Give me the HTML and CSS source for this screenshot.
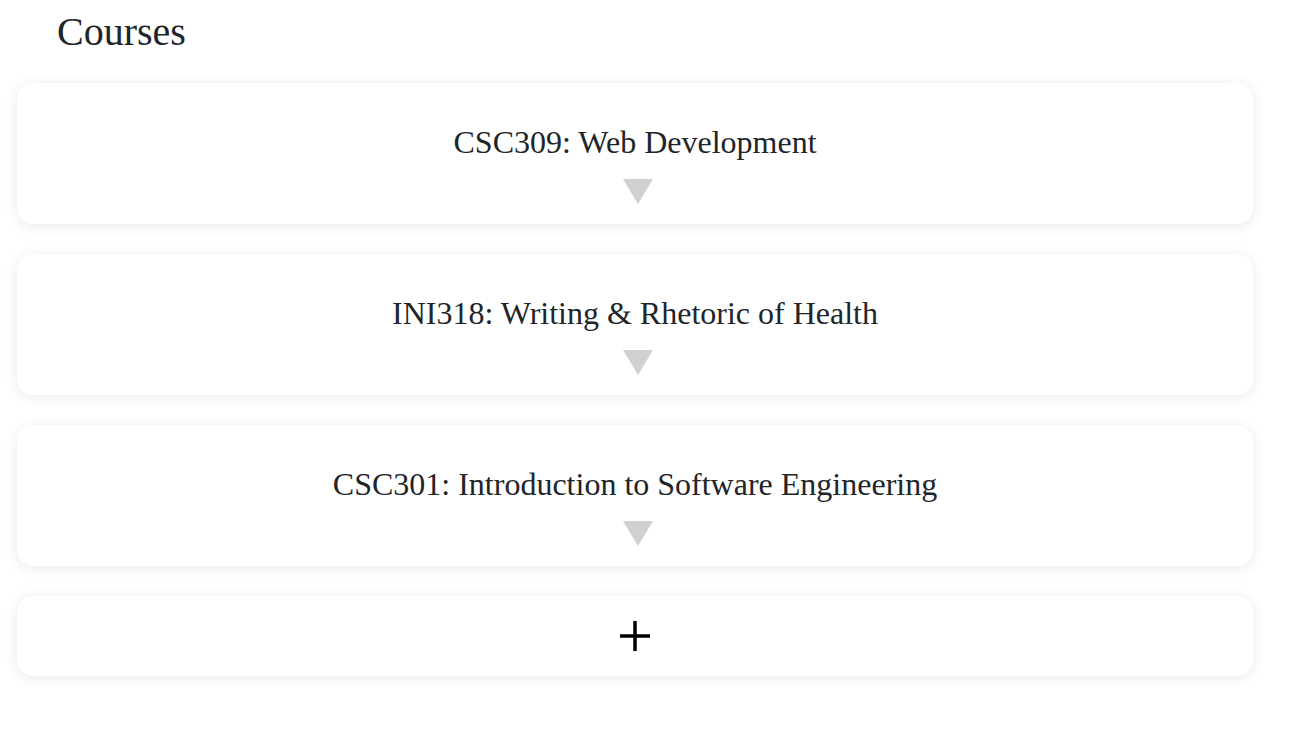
FILE: index.html
```html
<!DOCTYPE html>
<html>
<head>
<meta charset="utf-8">
<link rel="stylesheet" href="styles.css">
</head>
<body>
<div class="page">
  <h1 class="heading">Courses</h1>
  <div class="list">
    <div class="card">
      <div class="card-title">CSC309: Web Development</div>
      <div class="arrow"></div>
    </div>
    <div class="card">
      <div class="card-title">INI318: Writing &amp; Rhetoric of Health</div>
      <div class="arrow"></div>
    </div>
    <div class="card">
      <div class="card-title">CSC301: Introduction to Software Engineering</div>
      <div class="arrow"></div>
    </div>
    <div class="card add-card">
      <svg class="plus" width="30" height="30" viewBox="0 0 30 30"><path d="M15 0V30M0 15H30" stroke="#000" stroke-width="3.5" fill="none"/></svg>
    </div>
  </div>
</div>
</body>
</html>
```
FILE: styles.css
```css
html, body {
  margin: 0;
  padding: 0;
  background: #fff;
}
body {
  font-family: "Liberation Serif", "Times New Roman", serif;
  color: #212529;
  min-height: 732px;
}
.page {
  width: 1236px;
  padding: 0 0 56px 17px;
}
.heading {
  margin: 0 0 0 40px;
  padding-top: 8px;
  font-size: 40px;
  font-weight: normal;
  line-height: 48px;
  height: 75px;
}
.list {
  display: flex;
  flex-direction: column;
  gap: 30px;
}
.card {
  background: #fff;
  border-radius: 16px;
  box-shadow: 0 2px 14px rgba(0, 0, 0, 0.09);
  display: flex;
  flex-direction: column;
  align-items: center;
  padding: 40px 0 21px;
  height: 141px;
  box-sizing: border-box;
}
.card-title {
  font-size: 32px;
  line-height: 38px;
}
.arrow {
  margin: 18px 0 0 6px;
  width: 0;
  height: 0;
  border-left: 15px solid transparent;
  border-right: 15px solid transparent;
  border-top: 25px solid #d0d0d0;
}
.add-card {
  height: 80px;
  padding: 0;
  justify-content: center;
}
.plus {
  display: block;
}
```
